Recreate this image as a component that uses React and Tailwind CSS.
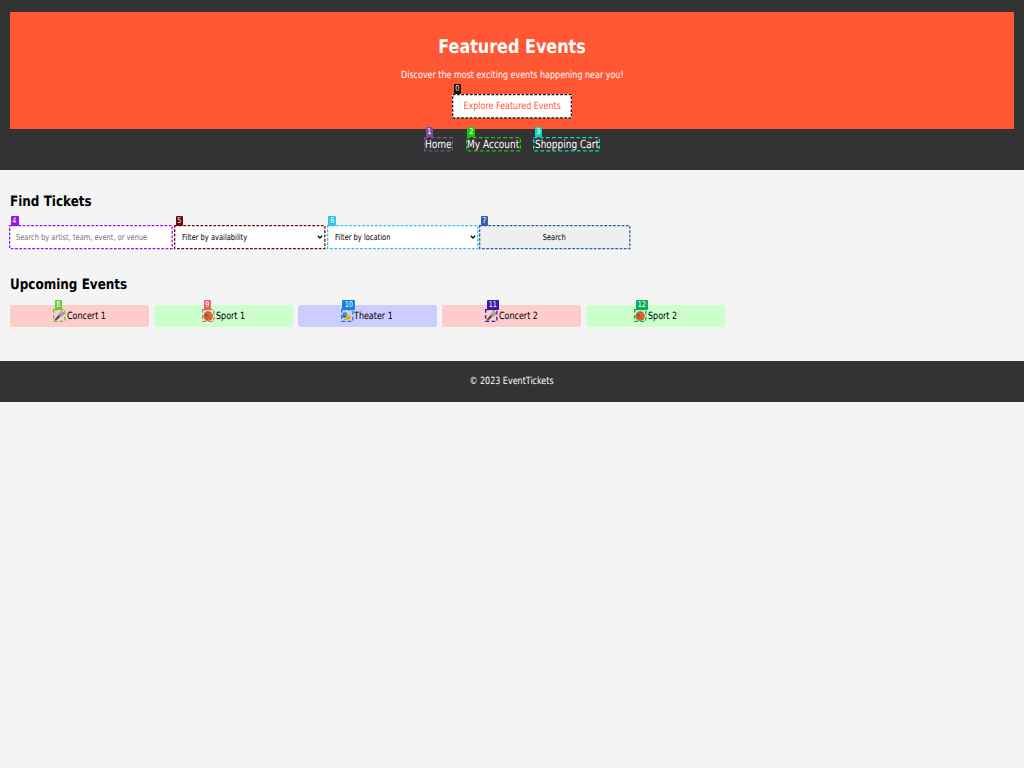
import React from "react";

function T({ children, className = "origin-center" }) {
  return <span className={`inline-block scale-x-[0.867] scale-y-[1.08] whitespace-nowrap ${className}`}>{children}</span>;
}

function Heading({ children, className = "origin-center" }) {
  return <span className={`inline-block scale-x-[0.867] scale-y-[1.03] whitespace-nowrap ${className}`}>{children}</span>;
}

function Tag({ n, color, className = "left-[1.6px]" }) {
  return (
    <span
      className={`absolute -top-[9.7px] z-10 flex h-[10.4px] items-center justify-center rounded-[1px] px-[1.5px] text-[7.4px] leading-none text-white ${className}`}
      style={{ backgroundColor: color }}
    >
      <T>{n}</T>
    </span>
  );
}

function Marked({ n, color, dash = "2.8 1.5", className = "", tagClass, children }) {
  return (
    <div className={`relative shrink-0 ${className}`}>
      {children}
      <svg className="pointer-events-none absolute inset-0 h-full w-full overflow-visible">
        <rect x="0.65" y="0.65" fill="none" stroke={color} strokeWidth="1.3" strokeDasharray={dash} style={{ width: "calc(100% - 1.3px)", height: "calc(100% - 1.3px)" }} />
      </svg>
      <Tag n={n} color={color} className={tagClass} />
    </div>
  );
}

function Chevron() {
  return (
    <svg className="absolute top-[8.8px] right-[2.4px] h-[6px] w-[6px]" viewBox="0 0 6 6" fill="none" stroke="#000" strokeWidth="1.3">
      <path d="M0.8 1.8 3 4 5.2 1.8" />
    </svg>
  );
}

const events = [
  { n: 8, color: "#66cc33", bg: "bg-[#ffcccc]", icon: "🎤", label: "Concert 1", pad: "pl-[43px]" },
  { n: 9, color: "#ee6066", bg: "bg-[#ccffcc]", icon: "🏀", label: "Sport 1", pad: "pl-[48px]" },
  { n: 10, color: "#1683d8", bg: "bg-[#ccccff]", icon: "🎭", label: "Theater 1", pad: "pl-[42.5px]" },
  { n: 11, color: "#3a1cad", bg: "bg-[#ffcccc]", icon: "🎤", label: "Concert 2", pad: "pl-[43px]" },
  { n: 12, color: "#0aad60", bg: "bg-[#ccffcc]", icon: "🏀", label: "Sport 2", pad: "pl-[48px]" },
];

export default function App() {
  return (
    <div className="min-h-screen bg-[#f4f4f4] text-[9.5px] text-black [font-family:'DejaVu_Sans',sans-serif] [text-rendering:geometricPrecision]">
      <header className="h-[170px] bg-[#333333] px-[10px] pt-[11.5px] text-[9.23px] text-white">
        <section className="flex h-[117px] flex-col items-center bg-[#ff5733]">
          <h1 className="mt-[25px] text-[18.46px] leading-[21px] font-bold"><Heading>Featured Events</Heading></h1>
          <p className="mt-[11px] leading-[14px]"><T>Discover the most exciting events happening near you!</T></p>
          <Marked n={0} color="#1c1008" className="mt-[11px] h-[24.5px] w-[120px] bg-white">
            <a className="flex h-full items-center justify-center pt-[2px] text-[#ff5733]"><T>Explore Featured Events</T></a>
          </Marked>
        </section>
        <nav className="mt-[8px] flex justify-center gap-[12.5px] text-[10.38px] leading-[16px]">
          <Marked n={1} color="#7d4f9e" dash="3.8 2.3" className="flex h-[14.5px] w-[29px] justify-center"><T>Home</T></Marked>
          <Marked n={2} color="#1ec610" dash="3.8 2.3" className="flex h-[14.5px] w-[55px] justify-center"><T>My Account</T></Marked>
          <Marked n={3} color="#14d8c0" dash="3.8 2.3" className="flex h-[14.5px] w-[67px] justify-center"><T>Shopping Cart</T></Marked>
        </nav>
      </header>
      <main className="h-[191px] px-[10px] pt-[22.5px] text-[9.23px]">
        <h2 className="text-[13.85px] leading-[18px] font-bold"><Heading className="origin-left">Find Tickets</Heading></h2>
        <div className="mt-[14.7px] -ml-[0.8px] flex gap-px text-[7.7px]">
          <Marked n={4} color="#9812f0" className="h-[24.2px] w-[163.8px] bg-white">
            <div className="flex h-full items-center pl-[6.8px] text-[#757575]"><T className="origin-left">Search by artist, team, event, or venue</T></div>
          </Marked>
          <Marked n={5} color="#6b0a0c" className="h-[24.2px] w-[151.5px] bg-white">
            <div className="flex h-full items-center pl-[8px]"><T className="origin-left">Filter by availability</T></div><Chevron />
          </Marked>
          <Marked n={6} color="#33c4e6" className="h-[24.2px] w-[151.5px] bg-white">
            <div className="flex h-full items-center pl-[8px]"><T className="origin-left">Filter by location</T></div><Chevron />
          </Marked>
          <Marked n={7} color="#335fae" className="h-[24.2px] w-[151.5px] bg-[#efefef]">
            <div className="flex h-full items-center justify-center pr-px"><T>Search</T></div>
          </Marked>
        </div>
        <h2 className="mt-[27px] text-[13.85px] leading-[18px] font-bold"><Heading className="origin-left">Upcoming Events</Heading></h2>
        <div className="mt-[10.6px] flex gap-[5.1px]">
          {events.map((e) => (
            <div key={e.n} className={`flex h-[22px] w-[139px] shrink-0 items-center rounded-[3px] ${e.bg} ${e.pad}`}>
              <Marked n={e.n} color={e.color} dash="3.8 2.3" className="h-[13px] w-[12.5px]">
                <span className="flex h-full items-center justify-center pt-[1.5px]"><span className="inline-block scale-x-[0.9] scale-y-[0.96]">{e.icon}</span></span>
              </Marked>
              <T className="mt-px ml-[1px] origin-left">{e.label}</T>
            </div>
          ))}
        </div>
      </main>
      <footer className="flex h-[41px] items-center justify-center bg-[#333333] pt-[1.5px] text-[9.23px] text-white"><T>© 2023 EventTickets</T></footer>
    </div>
  );
}
